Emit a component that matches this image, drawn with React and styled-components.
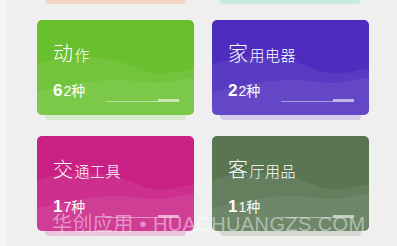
import React from 'react';
import styled, { createGlobalStyle } from 'styled-components';

const GlobalStyle = createGlobalStyle`
   html, body {
      margin: 0;
      padding: 0;
      background: #f6f6f6;
      overflow: hidden;
   }
   body {
      font-family: "Liberation Sans", "Noto Sans CJK SC", sans-serif;
   }
`;

const Screen = styled.div`
   position: relative;
   width: 390px;
   height: 246px;
   margin-left: 7px;
   background: #efefef;
   overflow: hidden;
`;

const Grid = styled.div`
   display: grid;
   grid-template-columns: 157px 157px;
   column-gap: 18px;
   row-gap: 16px;
   padding-left: 30px;
   margin-top: -96px;
`;

const Item = styled.div`
   display: flex;
   flex-direction: column;
`;

const Card = styled.div`
   position: relative;
   height: 95px;
   border-radius: 5px;
   background: ${p => p.color};
   overflow: hidden;
   color: #fff;
   display: flex;
   flex-direction: column;
   padding: 20px 15px 0 16px;
   box-sizing: border-box;
`;

const Shelf = styled.div`
   height: 5px;
   margin: 0 8px;
   border-radius: 0 0 4px 4px;
   background: ${p => p.color};
`;

const Waves = styled.svg`
   position: absolute;
   left: 0;
   top: 0;
   width: 157px;
   height: 95px;
`;

const Title = styled.div`
   position: relative;
   font-family: "Noto Sans CJK SC", sans-serif;
   font-weight: 300;
   font-size: 15px;
   line-height: 26px;
   letter-spacing: 0.5px;
   & b {
      font-weight: 300;
      font-size: 20px;
      margin-right: 1px;
   }
`;

const Footer = styled.div`
   position: relative;
   display: flex;
   justify-content: space-between;
   align-items: flex-end;
   margin-top: 12px;
`;

const Count = styled.div`
   font-size: 14px;
   line-height: 20px;
   & b {
      font-size: 17px;
      font-weight: 700;
      margin-right: 1px;
   }
   & span {
      font-family: "Noto Sans CJK SC", sans-serif;
   }
`;

const Track = styled.div`
   display: flex;
   align-items: flex-end;
   width: 73px;
   margin-bottom: -1px;
`;

const Line = styled.div`
   flex: 1;
   height: 1px;
   background: rgba(255, 255, 255, 0.45);
`;

const Fill = styled.div`
   width: 21px;
   height: 3px;
   background: rgba(255, 255, 255, 0.6);
`;

const Watermark = styled.div`
   position: absolute;
   left: 45px;
   top: 208px;
   font-family: "Liberation Sans", "Noto Sans CJK SC", sans-serif;
   font-size: 20px;
   color: rgba(255, 255, 255, 0.45);
   white-space: nowrap;
   letter-spacing: 0.4px;
   pointer-events: none;
`;

const items = [
   { color: '#ef8b58', shelf: '#f6d4c4' },
   { color: '#3ec79c', shelf: '#c6ecdc' },
   { big: '动', rest: '作', n: '6', unit: '2', color: '#69c02e', shelf: '#d7e9cc' },
   { big: '家', rest: '用电器', n: '2', unit: '2', color: '#4d2cbf', shelf: '#d3cbe8' },
   { big: '交', rest: '通工具', n: '1', unit: '7', color: '#c92085', shelf: '#ecc5dc' },
   { big: '客', rest: '厅用品', n: '1', unit: '1', color: '#597552', shelf: '#d3d9d0' },
];

function CardWaves() {
   return (
      <Waves viewBox="0 0 157 95" preserveAspectRatio="none">
         <path d="M0,44 C30,34 70,34 100,48 C122,58 140,52 157,48 L157,95 L0,95 Z" fill="rgba(255,255,255,0.07)" />
         <path d="M0,72 C35,64 70,56 105,62 C128,66 142,58 157,58 L157,95 L0,95 Z" fill="rgba(255,255,255,0.07)" />
      </Waves>
   );
}

export default function App() {
   return (
      <>
         <GlobalStyle />
         <Screen>
            <Grid>
               {items.map((it, i) => (
                  <Item key={i}>
                     <Card color={it.color}>
                        <CardWaves />
                        {it.big && (
                           <>
                              <Title><b>{it.big}</b>{it.rest}</Title>
                              <Footer>
                                 <Count><b>{it.n}</b>{it.unit}<span>种</span></Count>
                                 <Track><Line /><Fill /></Track>
                              </Footer>
                           </>
                        )}
                     </Card>
                     <Shelf color={it.shelf} />
                  </Item>
               ))}
            </Grid>
            <Watermark>华创应用 • HUACHUANGZS.COM</Watermark>
         </Screen>
      </>
   );
}
